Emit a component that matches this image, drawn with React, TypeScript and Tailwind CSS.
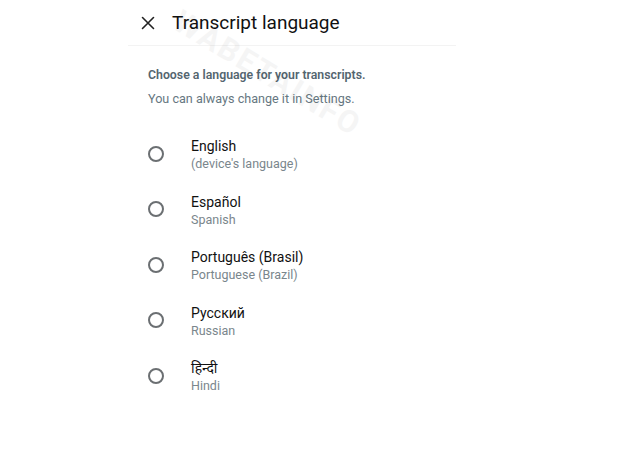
const languages = [
  { name: 'English', sub: "(device's language)" },
  { name: 'Español', sub: 'Spanish' },
  { name: 'Português (Brasil)', sub: 'Portuguese (Brazil)' },
  { name: 'Русский', sub: 'Russian' },
  { name: 'हिन्दी', sub: 'Hindi' },
];

export default function App() {
  return (
    <div
      className="relative w-[620px] h-[465px] bg-white overflow-hidden"
      style={{ fontFamily: 'Roboto, "Noto Sans", "Liberation Sans", sans-serif' }}
    >
      <div className="ml-[128px] w-[328px]">
        <div className="h-[46px] flex items-center border-b border-[#f3f3f3]">
          <svg width="14" height="14" viewBox="0 0 14 14" className="ml-[13px] text-[#222]">
            <path d="M1.5 1.5 L12.5 12.5 M12.5 1.5 L1.5 12.5" stroke="currentColor" strokeWidth="1.6" strokeLinecap="round" />
          </svg>
          <span className="ml-[17px] text-[19px] leading-none text-[#111]">Transcript language</span>
        </div>

        <div className="pl-[20px] pt-[21px]">
          <p className="text-[12.3px] leading-[16px] font-semibold text-[#54656f]">
            Choose a language for your transcripts.
          </p>
          <p className="mt-[8px] text-[12.6px] leading-[16px] text-[#667781]">
            You can always change it in Settings.
          </p>
        </div>

        <ul className="mt-[19px] pl-[20px]">
          {languages.map((l) => (
            <li key={l.sub} className="h-[55.5px] flex items-center">
              <span className="w-[16px] h-[16px] rounded-full border-2 border-[#6b6f72] shrink-0" />
              <div className="ml-[27px] flex flex-col pt-[2px]">
                <span className="text-[14px] leading-[18px] text-[#111]">{l.name}</span>
                <span className="text-[12.5px] leading-[17px] text-[#7a868c]">{l.sub}</span>
              </div>
            </li>
          ))}
        </ul>
      </div>

      <div className="absolute left-[176px] top-[-4px] rotate-[31deg] origin-left text-[31px] font-bold tracking-[2px] text-[#000] opacity-[0.035] pointer-events-none select-none">
        WABETAINFO
      </div>
    </div>
  );
}
